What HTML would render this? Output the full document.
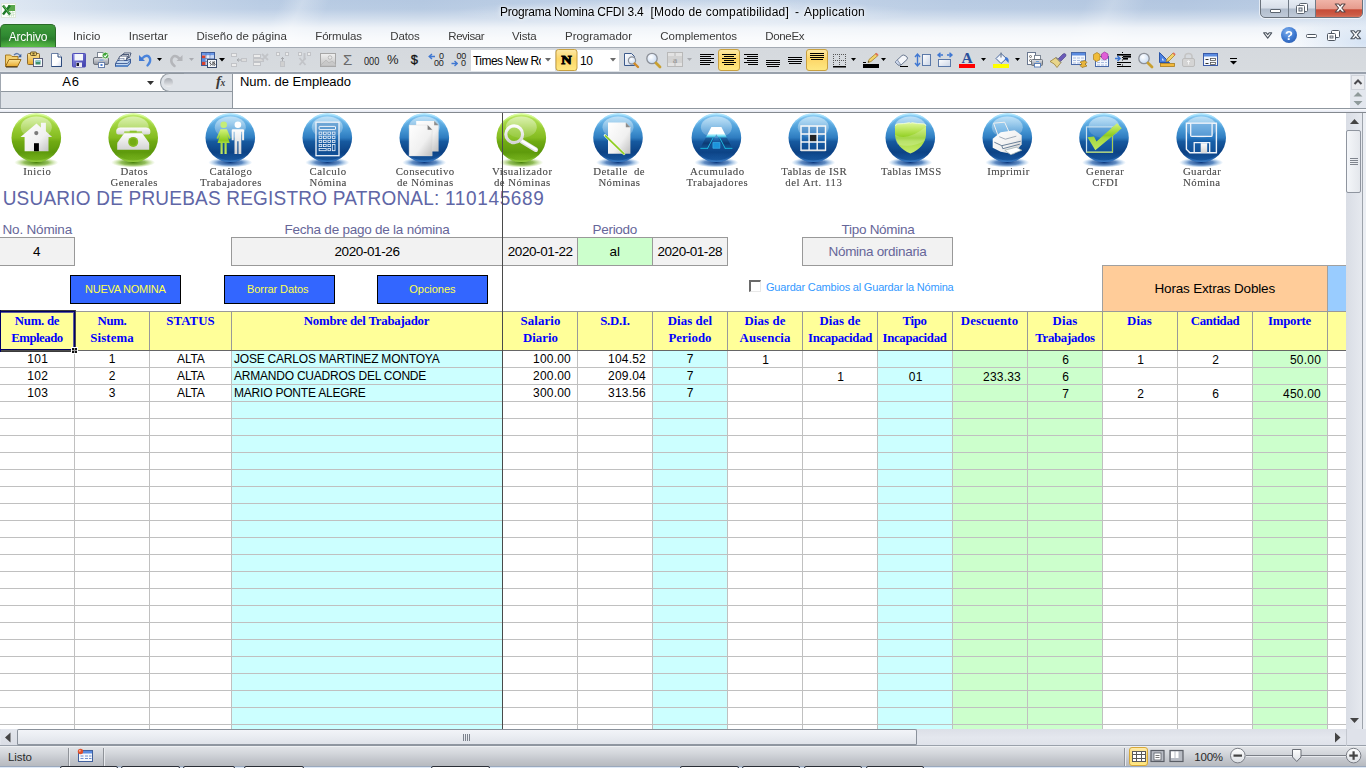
<!DOCTYPE html>
<html lang="es">
<head>
<meta charset="utf-8">
<title>Programa Nomina CFDI 3.4 [Modo de compatibilidad] - Application</title>
<style>
*{box-sizing:border-box;margin:0;padding:0}
html,body{width:1366px;height:768px;overflow:hidden;background:#fff}
body{position:relative;font-family:"Liberation Sans",sans-serif;font-size:12px;color:#1e1e1e}
.abs,.abs>*{position:absolute}
#app{position:absolute;left:0;top:0;width:1366px;height:768px;overflow:hidden}
#app div,#app span,#app svg{position:absolute}
.ui{font-family:"Liberation Sans",sans-serif;font-size:12px;white-space:pre}
/* title + tab strip */
#titlebg{left:0;top:0;width:1366px;height:47px;
 background:
  radial-gradient(ellipse 80px 26px at 1366px 42px,rgba(200,218,240,.75),rgba(200,218,240,0)),
  linear-gradient(180deg,rgba(255,255,255,0) 0,rgba(255,255,255,.05) 9px,rgba(255,255,255,.4) 19px,rgba(255,255,255,.78) 28px,rgba(255,255,255,.9) 38px,rgba(255,255,255,.94) 47px),
  radial-gradient(ellipse 230px 13px at 683px 12px,rgba(255,255,255,.55),rgba(255,255,255,0)),
  linear-gradient(115deg,rgba(255,255,255,0) 255px,rgba(255,255,255,.28) 275px,rgba(255,255,255,0) 300px),
  linear-gradient(115deg,rgba(255,255,255,0) 985px,rgba(255,255,255,.22) 1010px,rgba(255,255,255,0) 1040px),
  linear-gradient(90deg,#dfe8f3 0,#ccdaeb 110px,#b9cce4 260px,#b4c8e1 420px,#bccee5 560px,#c4d4e8 760px,#b8cbe3 950px,#b2c6e0 1180px,#bccee5 1366px)}
.tab{top:29px;height:16px;line-height:16px;color:#3b3b3b;letter-spacing:0.35px;font-size:12px}
#archivo{left:0;top:24px;width:56px;height:24px;border-radius:5px 5px 0 0;border:1px solid #2a6a28;border-bottom:none;
 background:radial-gradient(ellipse 40px 10px at 50% 100%,#5fc247,rgba(95,194,71,0)) ,linear-gradient(180deg,#3f9a3a 0%,#2f8a32 45%,#2a7d2c 60%,#47a83f 100%)}
#archivo span{left:0;width:54px;top:4px;text-align:center;color:#fff;font-size:12px;line-height:16px;letter-spacing:-.2px}
/* toolbar */
#qat{left:0;top:47px;width:1366px;height:26px;background:linear-gradient(180deg,#d5d9de 0,#d7dbdf 22px,#e2e6ec 24px);border-top:1px solid #a3aab3;border-bottom:1px solid #98a0ab}
/* formula bar */
#fbar{left:0;top:73px;width:1366px;height:40px;background:#fff}
#sheet{left:0;top:113px;width:1346px;height:616px;background:#fff;overflow:hidden}
.il{font:10.800px/13px 'Liberation Serif',serif;color:#555;white-space:pre;text-shadow:0 0 .6px rgba(80,80,80,.55)}
</style>
</head>
<body>
<div id="app">
<div id="titlebg"></div>
<svg id="xlicon" style="left:1px;top:3px" width="16" height="16" viewBox="0 0 16 16">
<rect x="0.5" y="0.5" width="14" height="14" fill="#fdfffc" stroke="#dfe8dc"/>
<rect x="7" y="2" width="7" height="6" fill="#5aa84c"/>
<rect x="7" y="9" width="6" height="4" fill="#e6f2e3" stroke="#9cc894" stroke-width=".6" stroke-dasharray="1 1"/>
<path d="M2 2.5 L9 11.5 M9 2.5 L2 11.5" stroke="#1f7a2a" stroke-width="2.4" fill="none"/>
<path d="M2.4 2.5 L8.6 10.5" stroke="#7ecb6f" stroke-width=".8" fill="none"/>
</svg>
<div id="ctext" style="left:0;top:0;width:1366px;height:47px;will-change:transform">
<span class="" style="left:500px;top:4px;font:12px 'Liberation Sans',sans-serif;line-height:16px;letter-spacing:-0.217px;white-space:pre;color:#000;text-shadow:0 0 6px #fff,0 0 3px rgba(255,255,255,.8)">Programa Nomina CFDI 3.4</span>
<span class="" style="left:650.5px;top:4px;font:12px 'Liberation Sans',sans-serif;line-height:16px;letter-spacing:0.212px;white-space:pre;color:#000;text-shadow:0 0 6px #fff,0 0 3px rgba(255,255,255,.8)">[Modo de compatibilidad]</span>
<span class="" style="left:795px;top:4px;font:12px 'Liberation Sans',sans-serif;line-height:16px;letter-spacing:-0.4px;white-space:pre;color:#000;text-shadow:0 0 6px #fff,0 0 3px rgba(255,255,255,.8)">-</span>
<span class="" style="left:804px;top:4px;font:12px 'Liberation Sans',sans-serif;line-height:16px;letter-spacing:0.207px;white-space:pre;color:#000;text-shadow:0 0 6px #fff,0 0 3px rgba(255,255,255,.8)">Application</span>
</div>
<div id="wbtn" style="left:1260px;top:-1px;width:103px;height:19px;border:1px solid #6a727c;border-radius:0 0 5px 5px;overflow:hidden;background:linear-gradient(180deg,#e6ecf4 0%,#d8dfe9 48%,#b0bccc 52%,#c0cad8 100%);box-shadow:0 0 0 1px rgba(255,255,255,.6)">
<div style="left:27px;top:0;width:1px;height:19px;background:#707a86"></div>
<div style="left:54px;top:0;width:1px;height:19px;background:#707a86"></div>
<div style="left:55px;top:0;width:48px;height:19px;background:linear-gradient(180deg,#f0b4a8 0%,#e69c8e 45%,#c64c38 52%,#cc5c46 78%,#e08870 100%)"></div>
<svg style="left:0;top:0" width="103" height="19" viewBox="0 0 103 19">
<rect x="9.5" y="9.5" width="10" height="3" rx=".5" fill="#fff" stroke="#5a636e"/>
<rect x="38.500" y="3.500" width="8" height="8" rx="1" fill="#fff" stroke="#5a636e"/>
<rect x="35.500" y="5.500" width="8" height="8" rx="1" fill="#fff" stroke="#5a636e"/>
<rect x="38" y="8" width="3" height="3" fill="#dfe5ec" stroke="#5a636e"/>
<polygon points="74.30,4.00 77.60,4.00 79.20,5.97 80.80,4.00 84.10,4.00 80.85,8.00 84.10,12.00 80.80,12.00 79.20,10.03 77.60,12.00 74.30,12.00 77.55,8.00" fill="#fff" stroke="#5a4646" stroke-width="1.100" stroke-linejoin="round"/>
</svg></div>
<svg style="left:1258px;top:26px" width="108" height="20" viewBox="0 0 108 20">
<polygon points="5.7,6.8 8.3,6.8 9.7,8.6 11.1,6.8 13.7,6.8 9.7,12.2" fill="#fff" stroke="#4d5560" stroke-width="1.100" stroke-linejoin="round"/>
<defs><radialGradient id="hg" cx=".4" cy=".3" r=".8"><stop offset="0" stop-color="#7fb0ee"/><stop offset=".6" stop-color="#3d78d0"/><stop offset="1" stop-color="#2a5cb0"/></radialGradient></defs>
<circle cx="31" cy="9" r="8" fill="url(#hg)"/>
<text x="31" y="13.500" text-anchor="middle" font-family="Liberation Sans,sans-serif" font-weight="bold" font-size="13" fill="#fff">?</text>
<rect x="48.500" y="8.500" width="10" height="3" rx="1" fill="#fff" stroke="#4d5560"/>
<rect x="73.500" y="4.500" width="8" height="7" rx="1" fill="#fff" stroke="#4d5560"/>
<rect x="69.500" y="7.500" width="8" height="7" rx="1" fill="#fff" stroke="#4d5560"/>
<rect x="72" y="10" width="3" height="2" fill="#e8ecf2" stroke="#4d5560" stroke-width=".8"/>
<polygon points="92.80,4.80 96.00,4.80 97.70,6.86 99.40,4.80 102.60,4.80 99.30,8.80 102.60,12.80 99.40,12.80 97.70,10.74 96.00,12.80 92.80,12.80 96.10,8.80" fill="#fff" stroke="#4d5560" stroke-width="1.100" stroke-linejoin="round"/>
</svg>
<div id="ctabs" style="left:0;top:0;width:1366px;height:47px;will-change:transform">
<div id="archivo"><span>Archivo</span></div>
<span class="" style="left:73px;top:28px;font:11.5px 'Liberation Sans',sans-serif;line-height:16px;letter-spacing:0.123px;white-space:pre;color:#3a3a3a">Inicio</span>
<span class="" style="left:128.7px;top:28px;font:11.5px 'Liberation Sans',sans-serif;line-height:16px;letter-spacing:0.013px;white-space:pre;color:#3a3a3a">Insertar</span>
<span class="" style="left:196.5px;top:28px;font:11.5px 'Liberation Sans',sans-serif;line-height:16px;letter-spacing:0.062px;white-space:pre;color:#3a3a3a">Diseño de página</span>
<span class="" style="left:315.3px;top:28px;font:11.5px 'Liberation Sans',sans-serif;line-height:16px;letter-spacing:-0.18px;white-space:pre;color:#3a3a3a">Fórmulas</span>
<span class="" style="left:390.3px;top:28px;font:11.5px 'Liberation Sans',sans-serif;line-height:16px;letter-spacing:-0.129px;white-space:pre;color:#3a3a3a">Datos</span>
<span class="" style="left:448.3px;top:28px;font:11.5px 'Liberation Sans',sans-serif;line-height:16px;letter-spacing:-0.469px;white-space:pre;color:#3a3a3a">Revisar</span>
<span class="" style="left:512px;top:28px;font:11.5px 'Liberation Sans',sans-serif;line-height:16px;letter-spacing:-0.152px;white-space:pre;color:#3a3a3a">Vista</span>
<span class="" style="left:565px;top:28px;font:11.5px 'Liberation Sans',sans-serif;line-height:16px;letter-spacing:-0.011px;white-space:pre;color:#3a3a3a">Programador</span>
<span class="" style="left:660.3px;top:28px;font:11.5px 'Liberation Sans',sans-serif;line-height:16px;letter-spacing:-0.054px;white-space:pre;color:#3a3a3a">Complementos</span>
<span class="" style="left:765.2px;top:28px;font:11.5px 'Liberation Sans',sans-serif;line-height:16px;letter-spacing:-0.32px;white-space:pre;color:#3a3a3a">DoneEx</span>
</div>
<div id="qat"></div>
<div style="left:471px;top:50px;width:84px;height:21px;background:#fff"></div>
<div style="left:577px;top:50px;width:42px;height:21px;background:#fff"></div>
<svg id="tbsvg" style="left:0;top:47px" width="1366" height="26" viewBox="0 47 1366 26"><defs>
<linearGradient id="gFold" x1="0" y1="0" x2="0" y2="1"><stop offset="0" stop-color="#fbe59a"/><stop offset="1" stop-color="#e8a92c"/></linearGradient>
<linearGradient id="gDoc" x1="0" y1="0" x2="1" y2="1"><stop offset="0" stop-color="#ffffff"/><stop offset="1" stop-color="#c9d4e6"/></linearGradient>
<linearGradient id="gDoc2" x1="0" y1="0" x2="1" y2="1"><stop offset="0" stop-color="#ffffff"/><stop offset=".6" stop-color="#ffffff"/><stop offset="1" stop-color="#d4dcec"/></linearGradient>
<linearGradient id="gFlop" x1="0" y1="0" x2="1" y2="1"><stop offset="0" stop-color="#8f90e8"/><stop offset="1" stop-color="#3b3ba8"/></linearGradient>
<linearGradient id="gPrn" x1="0" y1="0" x2="0" y2="1"><stop offset="0" stop-color="#e4e6ea"/><stop offset="1" stop-color="#8e939c"/></linearGradient>
<linearGradient id="gHi" x1="0" y1="0" x2="0" y2="1"><stop offset="0" stop-color="#fde9a8"/><stop offset=".45" stop-color="#fdd667"/><stop offset="1" stop-color="#fee883"/></linearGradient>
<radialGradient id="gLens" cx=".4" cy=".35" r=".7"><stop offset="0" stop-color="#ffffff"/><stop offset="1" stop-color="#c4d8f2"/></radialGradient>
<linearGradient id="gGray" x1="0" y1="0" x2="0" y2="1"><stop offset="0" stop-color="#f1f1f1"/><stop offset="1" stop-color="#bdbdbd"/></linearGradient>
<linearGradient id="gBlue" x1="0" y1="0" x2="0" y2="1"><stop offset="0" stop-color="#7fa8e8"/><stop offset="1" stop-color="#2f5cb8"/></linearGradient>
</defs>
<path d="M5.500 66.500 V55 h5 l1.500 1.500 h6 V59" fill="#f3cf6f" stroke="#a97c22"/>
<path d="M5.500 66.500 L9 59.500 H21 L17.500 66.500 Z" fill="url(#gFold)" stroke="#9a6d18"/><path d="M6 67 H17.500" stroke="#3a2a10" stroke-width="1"/>
<path d="M14 55 q3.500 -3.200 6 0.500" fill="none" stroke="#5a78a8" stroke-width="1.300"/><path d="M21.300 53.800 v3.400 h-3.400 z" fill="#3a5f9c"/>
<rect x="27.500" y="53.500" width="12" height="11" rx="1" fill="url(#gFold)" stroke="#8a6a30"/>
<rect x="30.500" y="52" width="6" height="3.500" rx="1" fill="#e8c860" stroke="#6a5426"/><rect x="32.500" y="53" width="2" height="1.500" fill="#6a5426"/>
<rect x="33.500" y="58.500" width="9" height="8" fill="#f7f9fc" stroke="#5a5e78"/>
<rect x="35.500" y="60.500" width="5" height="4" fill="#3f8f6f"/><rect x="35.500" y="60.500" width="5" height="1.500" fill="#8ccad0"/>
<path d="M51.500 53.500 h6.500 l3.500 3.500 v9.500 h-10 z" fill="url(#gDoc2)" stroke="#6a7fa4"/><path d="M61.500 57 v9.500 h-10" fill="none" stroke="#2c4a7c"/><path d="M58 53.500 v3.500 h3.500" fill="#fff" stroke="#2c4a7c"/>
<rect x="72.500" y="53.500" width="13" height="13.500" rx=".8" fill="url(#gFlop)" stroke="#5050b8"/>
<rect x="74.500" y="54" width="8.500" height="6.500" fill="#f4f6fb"/><rect x="76" y="62.500" width="6" height="4.500" fill="#ececf4"/><rect x="76.500" y="63" width="2.500" height="3" fill="#1a1a30"/>
<rect x="97.500" y="52.500" width="8" height="6" fill="#fff" stroke="#7d8794"/>
<rect x="93.500" y="57.500" width="15" height="7" rx="1.500" fill="url(#gPrn)" stroke="#6d737c"/>
<rect x="98.500" y="62.500" width="6" height="5" fill="#fff" stroke="#6a80a8"/><rect x="100.500" y="64" width="2" height="2" fill="#4a7fd0"/><rect x="99.500" y="59.500" width="4" height="1" fill="#6aa0e0"/>
<circle cx="105.500" cy="55.500" r="3.300" fill="#3fa33a" stroke="#e8f5e4" stroke-width=".8"/><path d="M103.800 55.500 l1.300 1.400 l2.200 -2.600" fill="none" stroke="#fff" stroke-width="1.100"/>
<path d="M121.500 57.500 l2.500 -4.500 h7 l-1.500 4.500 z" fill="#fff" stroke="#3a4a6a" stroke-width=".9"/><path d="M119.500 59 l2.500 -4.500 h7 l-1.500 4.500 z" fill="#fff" stroke="#3a4a6a" stroke-width=".9"/><path d="M117.500 60.500 l2.500 -4.500 h7.500 l-1.500 4.500 z" fill="#fff" stroke="#3a4a6a" stroke-width=".9"/>
<path d="M115.500 63.500 l2 -3 h9.500 l3.500 -1.500 v4 l-3 3.500 h-12 z" fill="#c4d8f0" stroke="#3a5a94"/><path d="M115.500 63.500 h12 l3 -3.500" fill="none" stroke="#3a5a94" stroke-width=".9"/><path d="M116 65 h11.500 l2.500 -3 v2 l-2.500 3 h-11.500z" fill="#5a88c8"/><rect x="119.500" y="58.500" width="4.500" height="2" fill="#e8eef8" stroke="#6a7a98" stroke-width=".6"/>
<path d="M142 58.500 q5.500 -5.500 8 0 q1 3.500 -2.500 7" fill="none" stroke="#4a84dc" stroke-width="2.400" stroke-linecap="round"/><path d="M139 55 v6 h6 z" fill="#3f77d2"/>
<path d="M157 58 h5 l-2.5 3.0 z" fill="#000"/>
<path d="M180 59 q-6 -6 -8.500 0 q-1 4 3 7" fill="none" stroke="#b4b6ba" stroke-width="2.600" stroke-linecap="round"/><path d="M182.500 55 v6 h-6 z" fill="#b4b6ba"/>
<path d="M189 58 h5 l-2.5 3.0 z" fill="#a9abb0"/>
<rect x="201.500" y="52.500" width="13" height="13" fill="#fff" stroke="#3c5a96"/><rect x="202" y="53" width="12" height="2.500" fill="#6a98e8"/>
<rect x="202" y="55.500" width="3.500" height="3" fill="#d8402c"/><rect x="202" y="61.500" width="3.500" height="3.500" fill="#d8402c"/><rect x="202" y="58.500" width="3.500" height="3" fill="#5a8ae0"/><rect x="206.500" y="55.500" width="3.500" height="3" fill="#e8eefa"/><rect x="210.500" y="55.500" width="3.500" height="3" fill="#c8d8f4"/><path d="M206 53 v12 M210 53 v12 M202 58.500 h12 M202 61.500 h12" stroke="#5a7ab8" stroke-width=".7"/>
<rect x="207.500" y="59.500" width="9" height="8" fill="#f4f6fa" stroke="#3a4a68"/><path d="M210.500 61.500 q-1.500 1 0 2 q1.500 1 0 2 M213 61.500 v4 M214.500 61.500 q-1 1 0 2 q1 1 0 2" stroke="#111" stroke-width=".9" fill="none"/>
<path d="M219 58 h6 l-3.0 3.5 z" fill="#000"/>
<rect x="231.500" y="53.500" width="5" height="3" fill="#ececec" stroke="#c2c4c8"/><rect x="231.500" y="63.500" width="5" height="3" fill="#ececec" stroke="#c2c4c8"/><rect x="241.500" y="58.500" width="5" height="3" fill="#dcdcdc" stroke="#c2c4c8"/><path d="M237 60 h4 M237 60 l2 -1.500 M237 60 l2 1.500" stroke="#a8aaae" fill="none"/>
<rect x="253.500" y="54.500" width="7" height="3" fill="#ececec" stroke="#c2c4c8"/><rect x="253.500" y="58.500" width="10" height="3" fill="#d8d8d8" stroke="#c2c4c8"/><rect x="253.500" y="62.500" width="7" height="3" fill="#ececec" stroke="#c2c4c8"/><path d="M262 54 l6 6 M268 54 l-6 6" stroke="#c2c4c8" stroke-width="1.800"/>
<rect x="276.500" y="52.500" width="3" height="3" fill="#ececec" stroke="#c2c4c8"/><rect x="285.500" y="52.500" width="3" height="3" fill="#ececec" stroke="#c2c4c8"/><rect x="280.500" y="61.500" width="4" height="5" fill="#d0d0d0" stroke="#c2c4c8"/><path d="M282.500 57 v4 M281 58.500 h3" stroke="#a8aaae"/>
<rect x="298.500" y="52.500" width="3" height="3" fill="#ececec" stroke="#c2c4c8"/><rect x="307.500" y="52.500" width="3" height="3" fill="#ececec" stroke="#c2c4c8"/><path d="M304.500 53 v7" stroke="#c2c4c8" stroke-width="2"/><path d="M299.500 58 l6 7 M305.500 58 l-6 7" stroke="#c2c4c8" stroke-width="1.800"/>
<rect x="320.500" y="53.500" width="15" height="13" fill="url(#gGray)" stroke="#a6a6a6"/><path d="M321 65 l5 -5 l3 3 l3 -2 l3.500 3 v2 h-14.500z" fill="#c8c8c8" stroke="#b0b0b0" stroke-width=".6"/><circle cx="330" cy="57.500" r="1.800" fill="#e8e8e8" stroke="#b0b0b0" stroke-width=".8"/>
<rect x="556.0" y="49.500" width="21" height="21" rx="2.500" fill="url(#gHi)" stroke="#c8a040"/>
<rect x="718.5" y="49.500" width="21" height="21" rx="2.500" fill="url(#gHi)" stroke="#c8a040"/>
<rect x="806.5" y="49.500" width="21" height="21" rx="2.500" fill="url(#gHi)" stroke="#c8a040"/>
<rect x="700" y="54" width="14" height="1" fill="#000"/>
<rect x="700" y="56" width="11" height="1" fill="#000"/>
<rect x="700" y="58" width="14" height="1" fill="#000"/>
<rect x="700" y="60" width="11" height="1" fill="#000"/>
<rect x="700" y="62" width="14" height="1" fill="#000"/>
<rect x="700" y="64" width="10" height="1" fill="#000"/>
<rect x="722.0" y="54" width="14" height="1" fill="#000"/>
<rect x="724.0" y="56" width="10" height="1" fill="#000"/>
<rect x="722.0" y="58" width="14" height="1" fill="#000"/>
<rect x="724.0" y="60" width="10" height="1" fill="#000"/>
<rect x="722.0" y="62" width="14" height="1" fill="#000"/>
<rect x="724.0" y="64" width="10" height="1" fill="#000"/>
<rect x="744" y="54" width="14" height="1" fill="#000"/>
<rect x="747" y="56" width="11" height="1" fill="#000"/>
<rect x="744" y="58" width="14" height="1" fill="#000"/>
<rect x="747" y="60" width="11" height="1" fill="#000"/>
<rect x="744" y="62" width="14" height="1" fill="#000"/>
<rect x="748" y="64" width="10" height="1" fill="#000"/>
<rect x="766.0" y="60" width="14" height="1" fill="#000"/>
<rect x="766.0" y="62" width="14" height="1" fill="#000"/>
<rect x="766.0" y="64" width="14" height="1" fill="#000"/>
<rect x="767.0" y="66" width="12" height="1" fill="#000"/>
<rect x="788.0" y="57" width="14" height="1" fill="#000"/>
<rect x="788.0" y="59" width="14" height="1" fill="#000"/>
<rect x="788.0" y="61" width="14" height="1" fill="#000"/>
<rect x="789.0" y="63" width="12" height="1" fill="#000"/>
<rect x="810.0" y="53" width="14" height="1" fill="#000"/>
<rect x="810.0" y="55" width="14" height="1" fill="#000"/>
<rect x="810.0" y="57" width="14" height="1" fill="#000"/>
<rect x="811.0" y="59" width="12" height="1" fill="#000"/>
<path d="M624.500 53.500 h7 l3 3 v9 h-10 z" fill="url(#gDoc)" stroke="#3c5a8c"/>
<circle cx="632" cy="60.500" r="3.600" fill="url(#gLens)" stroke="#8a8f98" stroke-width="1.200"/><path d="M634.500 63.500 l3.500 3.500" stroke="#d08a28" stroke-width="2.400" stroke-linecap="round"/>
<circle cx="652" cy="58.500" r="5.200" fill="url(#gLens)" stroke="#8c9098" stroke-width="1.300"/><path d="M656 63 l4 4" stroke="#c9a030" stroke-width="2.800" stroke-linecap="round"/>
<rect x="667.500" y="52.500" width="15" height="14" fill="#e2e2e2" stroke="#b8b8b8"/><rect x="668" y="56" width="14" height="7" fill="#d2d2d2"/><path d="M675 53 v3 M675 63 v3" stroke="#b8b8b8"/>
<text x="675" y="62.500" text-anchor="middle" font-family="Liberation Serif,serif" font-weight="bold" font-size="9" fill="#a0a0a0">a</text>
<path d="M687 58 h5 l-2.5 3.0 z" fill="#a9abb0"/>
<path d="M833 54.500 h13" stroke="#555" stroke-dasharray="1 1"/>
<path d="M833 60.500 h13" stroke="#555" stroke-dasharray="1 1"/>
<path d="M833.500 54 v12" stroke="#555" stroke-dasharray="1 1"/>
<path d="M839.500 54 v12" stroke="#555" stroke-dasharray="1 1"/>
<path d="M845.500 54 v12" stroke="#555" stroke-dasharray="1 1"/>
<rect x="833" y="66" width="13" height="1.500" fill="#000"/>
<path d="M851 58 h5 l-2.5 3.0 z" fill="#000"/>
<rect x="863" y="64" width="16" height="4" fill="#000"/><rect x="863" y="62" width="3" height="1" fill="#000"/>
<path d="M868 62.500 l1 -3 l7 -6 l2 2 l-7 6 z" fill="#f2d36a" stroke="#a8842a" stroke-width=".8"/><path d="M875 54 l1.500 -1.200 l2 2 l-1.500 1.200z" fill="#e0705c"/><path d="M868 62.500 l.5 -1.500 l1 1z" fill="#333"/>
<path d="M881 58 h5 l-2.5 3.0 z" fill="#000"/>
<path d="M895 62 l7 -6.500 q1 -1 3 0 l2 1.500 q1 1 0 2.500 l-6 5.500 h-3 z" fill="#f4f6fa" stroke="#6a7890"/><path d="M895 62 l3 3 h3 l-3.500 -5" fill="#c8d4ea" stroke="#6a7890" stroke-width=".7"/><path d="M900 66.500 h8" stroke="#000"/>
<rect x="922.500" y="54.500" width="8" height="11" fill="url(#gDoc)" stroke="#5a78a8"/><path d="M917.500 54 v12 M915 57 l2.500 -3 l2.500 3 M915 63 l2.500 3 l2.500 -3" fill="none" stroke="#3f77d2" stroke-width="1.400"/>
<rect x="938.500" y="59.500" width="12" height="7" fill="url(#gDoc)" stroke="#5a78a8"/><path d="M938 55 h5 M947 55 h5 M940.500 52.800 l-2.500 2.200 l2.500 2.200 M949.500 52.800 l2.500 2.200 l-2.500 2.200" fill="none" stroke="#3f77d2" stroke-width="1.400"/>
<text x="967" y="63" text-anchor="middle" font-family="Liberation Serif,serif" font-weight="bold" font-size="15.500" fill="#2b4f9a">A</text><rect x="959" y="64" width="16" height="4" fill="#ff0000"/>
<path d="M981 58 h5 l-2.5 3.0 z" fill="#000"/>
<rect x="993" y="64" width="16" height="4" fill="#ffff00"/>
<path d="M996 58.500 l5 -5 l5.500 5 l-5.500 5 z" fill="#f2f6fc" stroke="#4a6aa0"/><path d="M1001 52.500 v5" stroke="#6a7a90" stroke-width="1.200"/><path d="M1006 57 q3.500 1 2.500 6 q-2 -3 -4 -3.500z" fill="#3f77d2"/>
<path d="M1015 58 h5 l-2.5 3.0 z" fill="#000"/>
<rect x="1027.500" y="52.500" width="8" height="12" fill="#fff" stroke="#6a7890"/><circle cx="1030.500" cy="56.500" r="1" fill="none" stroke="#444" stroke-width=".7"/><circle cx="1030.500" cy="60.500" r="1" fill="none" stroke="#444" stroke-width=".7"/>
<rect x="1034.500" y="55.500" width="6" height="4" fill="#fff" stroke="#7d8794"/><rect x="1031.500" y="59.500" width="11" height="6" rx="1" fill="url(#gPrn)" stroke="#6d737c"/><rect x="1034.500" y="63.500" width="6" height="3.500" fill="#fff" stroke="#5a7fb8"/><rect x="1036" y="61" width="3" height="1" fill="#6aa0e0"/>
<path d="M1058 59 l5 -5 q1.500 -1 2.500 0 q1 1 0 2.500 l-5 5z" fill="#6a5ab8" stroke="#3f3a80" stroke-width=".6"/><path d="M1050 61.500 l6 -4 l5 5 l-4 5 q-2 -4 -7 -6z" fill="#e8d58a" stroke="#9a8238" stroke-width=".8"/><path d="M1056 57.500 l5 5" stroke="#888" stroke-width="1.200"/>
<rect x="1071.500" y="52.500" width="14" height="12" fill="#f4f7fc" stroke="#4a6aa8"/><rect x="1072" y="53" width="13" height="2.500" fill="#5a8be0"/><path d="M1073 58 h11 M1073 60.500 h11 M1073 63 h11" stroke="#a8bce0" stroke-width="1.200" stroke-dasharray="3 1"/>
<path d="M1080 62 l5 -1.500 l2 2 l-2 1.500 l2 2 l-5 1.500 l-2 -2 l2 -1.500z" fill="#e8b43a" stroke="#9a7420" stroke-width=".7"/>
<rect x="1095.500" y="56.500" width="13" height="10" fill="#f4f7fc" stroke="#4a6aa8"/><path d="M1097 60 h10 M1097 62.500 h10 M1097 65 h10" stroke="#a8bce0" stroke-width="1.200" stroke-dasharray="3 1"/>
<path d="M1093.500 54.500 l3.500 -2 l3 2 v5 l-3.500 2 l-3 -2z" fill="#f0bc3a" stroke="#a87c20" stroke-width=".7"/><path d="M1101.500 54 l3 -2 l3.500 2 v4 l-3.500 2 l-3 -2z" fill="#e060d8" stroke="#a030a0" stroke-width=".7"/>
<rect x="1117" y="54" width="14" height="1.6" fill="#000"/>
<rect x="1123" y="56" width="8" height="1.6" fill="#000"/>
<rect x="1123" y="58" width="5" height="1.6" fill="#000"/>
<rect x="1117" y="62" width="14" height="1" fill="#000"/>
<rect x="1117" y="64" width="4" height="1" fill="#000"/>
<rect x="1117" y="66" width="14" height="1" fill="#000"/>
<path d="M1122.500 52 v15" stroke="#000" stroke-dasharray="1 1.500"/><path d="M1115 58.500 h4 M1117.500 56 l2.500 2.500 l-2.500 2.500" fill="none" stroke="#3f77d2" stroke-width="1.500"/>
<circle cx="1144" cy="58.500" r="5.200" fill="url(#gLens)" stroke="#8c9098" stroke-width="1.300"/><path d="M1148 63 l4 4" stroke="#c9a030" stroke-width="2.800" stroke-linecap="round"/>
<path d="M1159.500 52.500 v10 h10 z" fill="#4a80e0" stroke="#2a55a8"/><path d="M1162 58 v2.500 h2.500z" fill="#cfe0fa"/><rect x="1160.500" y="63.500" width="14" height="3" fill="#f2b83a" stroke="#a87c20" stroke-width=".8"/>
<path d="M1166 61.500 l1 -2.500 l6 -6 l2 2 l-6 6 z" fill="#f2d36a" stroke="#a8842a" stroke-width=".8"/><path d="M1172.500 53.500 l1.200 -1.200 l2 2 l-1.200 1.200z" fill="#e0705c"/>
<path d="M1185 59 v-2.500 q0 -3 3.500 -3 q3.500 0 3.500 3 v2.500" fill="none" stroke="#c4c4c4" stroke-width="1.600"/><rect x="1182.500" y="58.500" width="12" height="8" rx="1.500" fill="#d4d4d4" stroke="#bcbcbc"/><path d="M1188.500 61 v3.500 M1187 62 l1.500 -1.500 l1.500 1.500" stroke="#f4f4f4" fill="none"/>
<rect x="1203.500" y="53.500" width="14" height="12" fill="#f4f7fc" stroke="#3a5aa8"/><rect x="1204" y="54" width="13" height="2.500" fill="#5a8be0"/><rect x="1210.500" y="58.500" width="5" height="2" fill="#fff" stroke="#555" stroke-width=".8"/><rect x="1210.500" y="62.500" width="5" height="2" fill="#fff" stroke="#555" stroke-width=".8"/><path d="M1205.500 59.500 h3 M1205.500 63.500 h3" stroke="#333"/>
<rect x="1230" y="58" width="7" height="1" fill="#000"/><path d="M1230 61 h7 l-3.500 3.500z" fill="#000"/></svg>
<div style="left:473px;top:51px;width:67.500px;height:19px;overflow:hidden">
<span style="left:0px;top:1.5px;font:12px 'Liberation Sans',sans-serif;line-height:16px;letter-spacing:-0.551px;white-space:pre;color:#000">Times New Roman</span>
</div>
<svg style="left:545px;top:58px" width="7" height="5" viewBox="0 0 7 5"><path d="M0 0 h6 l-3 3.500z" fill="#6a6a6a"/></svg>
<svg style="left:610px;top:58px" width="7" height="5" viewBox="0 0 7 5"><path d="M0 0 h6 l-3 3.500z" fill="#6a6a6a"/></svg>
<span style="left:580px;top:52.5px;font:12px 'Liberation Sans',sans-serif;line-height:16px;letter-spacing:-0.43px;white-space:pre;color:#000">10</span>
<span style="left:556px;top:50px;width:21px;height:20px;text-align:center;font:bold 12.500px/20px 'Liberation Serif',serif;color:#000;-webkit-text-stroke:.9px #000;transform:scaleX(1.15)">N</span>
<span style="left:343px;top:50px;font:15px/20px 'Liberation Sans',sans-serif;color:#6a6a6a">Σ</span>
<span style="left:363.5px;top:53px;font:11.500px 'Liberation Sans',sans-serif;line-height:16px;letter-spacing:-0.062px;white-space:pre;color:#222;transform:scaleX(.8);transform-origin:0 0">000</span>
<span style="left:387px;top:52px;font:13px 'Liberation Sans',sans-serif;line-height:16px;letter-spacing:-0.062px;white-space:pre;color:#222">%</span>
<span style="left:410.800px;top:51.500px;font:13px/16px 'Liberation Sans',sans-serif;color:#111;-webkit-text-stroke:.3px #111">$</span>
<span style="left:439px;top:50.500px;font:9px/10px 'Liberation Sans',sans-serif;color:#222">0</span>
<span style="left:434px;top:57.500px;font:9px/10px 'Liberation Sans',sans-serif;color:#222;letter-spacing:-.3px">00</span>
<span style="left:456.500px;top:50.500px;font:9px/10px 'Liberation Sans',sans-serif;color:#222;letter-spacing:-.3px">00</span>
<span style="left:461px;top:57.500px;font:9px/10px 'Liberation Sans',sans-serif;color:#222">0</span>
<svg style="left:428px;top:52px" width="30" height="16" viewBox="428 52 30 16"><path d="M429.500 56.500 h5.500 M432 54 l-2.800 2.500 l2.800 2.500" fill="none" stroke="#3f77d2" stroke-width="1.400"/><path d="M451.500 63.500 h5.500 M454.500 61 l2.800 2.500 l-2.800 2.500" fill="none" stroke="#3f77d2" stroke-width="1.400"/></svg>
<div style="left:0px;top:73px;width:1366px;height:40px;background:#fff;"></div>
<div style="left:0px;top:73px;width:1366px;height:1px;background:#9aa2ad;"></div>
<div style="left:0px;top:92px;width:233px;height:16px;background:#dfe3e8;"></div>
<div style="left:0px;top:91px;width:233px;height:1px;background:#8f979f;"></div>
<div style="left:170px;top:74px;width:63px;height:17px;background:#dfe3e8;"></div>
<div style="left:160px;top:73px;width:24px;height:19px;border:1px solid #8f979f;border-right:none;border-radius:10px 0 0 10px;background:#dfe3e8"></div>
<div style="left:232px;top:74px;width:1px;height:34px;background:#8f979f;"></div>
<div style="left:0px;top:74px;width:1px;height:38px;background:#a0a7b0;"></div>
<div style="left:0px;top:108px;width:1366px;height:1px;background:#8f979f;"></div>
<div style="left:0px;top:109px;width:1366px;height:3px;background:linear-gradient(180deg,#fdfdfe,#e4e8f2);"></div>
<div style="left:0px;top:112px;width:1366px;height:1px;background:#84898f;"></div>
<div style="left:164px;top:78px;width:9px;height:9px;border-radius:5px;background:linear-gradient(180deg,#a9adb3,#c9ccd1 50%,#eceef0)"></div>
<span style="left:216px;top:72.500px;font:italic bold 15px/17px 'Liberation Serif',serif;color:#3a3a3a;letter-spacing:-.5px">f<span style="position:static;font-size:9.500px;font-style:italic">x</span></span>
<svg style="left:147px;top:81px" width="7" height="4" viewBox="0 0 7 4"><path d="M0 0h7l-3.500 4z" fill="#333"/></svg>
<span style="left:62.3px;top:74px;font:13px 'Liberation Sans',sans-serif;line-height:16px;letter-spacing:0.797px;white-space:pre;color:#000">A6</span>
<span style="left:240px;top:74px;font:13px 'Liberation Sans',sans-serif;line-height:16px;letter-spacing:-0.018px;white-space:pre;color:#000">Num. de Empleado</span>
<div style="left:1350px;top:74px;width:16px;height:34px;background:#e3e7ee;"></div>
<div style="left:1351px;top:75px;width:14px;height:15px;background:#e9ebef;border:1px solid #cfd3da"></div>
<svg style="left:1350px;top:74px" width="16" height="34" viewBox="1350 74 16 34"><path d="M1354.500 84 l3.500 -3.500 l3.500 3.500" fill="none" stroke="#4a4a4e" stroke-width="2"/><path d="M1353.500 96.500 h9 l-4.500 -4.500z M1353.500 101 h9 l-4.500 4.500z" fill="#8f9a9a"/></svg>
<div style="left:0px;top:113px;width:1346px;height:616px;background:#fff;"></div>
<div style="left:0px;top:311px;width:1346px;height:40px;background:#ffff99;"></div>
<div style="left:232px;top:351px;width:270px;height:378px;background:#ccffff;"></div>
<div style="left:653px;top:351px;width:74px;height:378px;background:#ccffff;"></div>
<div style="left:878px;top:351px;width:74px;height:378px;background:#ccffff;"></div>
<div style="left:953px;top:351px;width:74px;height:378px;background:#ccffcc;"></div>
<div style="left:1028px;top:351px;width:74px;height:378px;background:#ccffcc;"></div>
<div style="left:1253px;top:351px;width:74px;height:378px;background:#ccffcc;"></div>
<div style="left:1102px;top:265px;width:226px;height:47px;background:#ffcc99;"></div>
<div style="left:1328px;top:265px;width:18px;height:46px;background:#99ccff;"></div>
<div style="left:1102px;top:265px;width:244px;height:1px;background:#a0a0a0;"></div>
<div style="left:1102px;top:265px;width:1px;height:46px;background:#a0a0a0;"></div>
<div style="left:1327px;top:265px;width:1px;height:46px;background:#a0a0a0;"></div>
<div style="left:0;top:351px;width:1346px;height:378px;background:repeating-linear-gradient(180deg,transparent 0,transparent 16px,#c0c0c0 16px,#c0c0c0 17px)"></div>
<div style="left:74px;top:351px;width:1px;height:378px;background:#c0c0c0;"></div>
<div style="left:149px;top:351px;width:1px;height:378px;background:#c0c0c0;"></div>
<div style="left:231px;top:351px;width:1px;height:378px;background:#c0c0c0;"></div>
<div style="left:577px;top:351px;width:1px;height:378px;background:#c0c0c0;"></div>
<div style="left:652px;top:351px;width:1px;height:378px;background:#c0c0c0;"></div>
<div style="left:727px;top:351px;width:1px;height:378px;background:#c0c0c0;"></div>
<div style="left:802px;top:351px;width:1px;height:378px;background:#c0c0c0;"></div>
<div style="left:877px;top:351px;width:1px;height:378px;background:#c0c0c0;"></div>
<div style="left:952px;top:351px;width:1px;height:378px;background:#c0c0c0;"></div>
<div style="left:1027px;top:351px;width:1px;height:378px;background:#c0c0c0;"></div>
<div style="left:1102px;top:351px;width:1px;height:378px;background:#c0c0c0;"></div>
<div style="left:1177px;top:351px;width:1px;height:378px;background:#c0c0c0;"></div>
<div style="left:1252px;top:351px;width:1px;height:378px;background:#c0c0c0;"></div>
<div style="left:1327px;top:351px;width:1px;height:378px;background:#c0c0c0;"></div>
<div style="left:0px;top:311px;width:1346px;height:1px;background:#999;"></div>
<div style="left:74px;top:311px;width:1px;height:39px;background:#999;"></div>
<div style="left:149px;top:311px;width:1px;height:39px;background:#999;"></div>
<div style="left:231px;top:311px;width:1px;height:39px;background:#999;"></div>
<div style="left:577px;top:311px;width:1px;height:39px;background:#999;"></div>
<div style="left:652px;top:311px;width:1px;height:39px;background:#999;"></div>
<div style="left:727px;top:311px;width:1px;height:39px;background:#999;"></div>
<div style="left:802px;top:311px;width:1px;height:39px;background:#999;"></div>
<div style="left:877px;top:311px;width:1px;height:39px;background:#999;"></div>
<div style="left:952px;top:311px;width:1px;height:39px;background:#999;"></div>
<div style="left:1027px;top:311px;width:1px;height:39px;background:#999;"></div>
<div style="left:1102px;top:311px;width:1px;height:39px;background:#999;"></div>
<div style="left:1177px;top:311px;width:1px;height:39px;background:#999;"></div>
<div style="left:1252px;top:311px;width:1px;height:39px;background:#999;"></div>
<div style="left:1327px;top:311px;width:1px;height:39px;background:#999;"></div>
<div style="left:0px;top:350px;width:1346px;height:1px;background:#666;"></div>
<div style="left:-1px;top:237px;width:76px;height:29px;background:#f2f2f2;border:1px solid #999"></div>
<div style="left:231px;top:237px;width:272px;height:29px;background:#f2f2f2;border:1px solid #999"></div>
<div style="left:502px;top:237px;width:76px;height:29px;background:#f2f2f2;border:1px solid #999"></div>
<div style="left:577px;top:237px;width:76px;height:29px;background:#ccffcc;border:1px solid #999"></div>
<div style="left:652px;top:237px;width:76px;height:29px;background:#f2f2f2;border:1px solid #999"></div>
<div style="left:802px;top:237px;width:151px;height:29px;background:#f2f2f2;border:1px solid #999"></div>
<div style="left:502px;top:113px;width:1px;height:616px;background:#555;"></div>
<div style="left:0px;top:310px;width:76px;height:1px;background:#3a3a3a;"></div>
<div style="left:0px;top:311px;width:76px;height:1px;background:#000066;"></div>
<div style="left:0px;top:312px;width:76px;height:1px;background:#5a5a9c;"></div>
<div style="left:0px;top:349px;width:76px;height:1px;background:#000066;"></div>
<div style="left:0px;top:350px;width:76px;height:1px;background:#4a4a4a;"></div>
<div style="left:0px;top:351px;width:76px;height:1px;background:#3a3a3a;"></div>
<div style="left:0px;top:310px;width:1px;height:42px;background:#000066;"></div>
<div style="left:73px;top:312px;width:1px;height:38px;background:#5a5a9c;"></div>
<div style="left:74px;top:311px;width:1px;height:40px;background:#000066;"></div>
<div style="left:75px;top:310px;width:1px;height:42px;background:#4a4a4a;"></div>
<div style="left:71px;top:347px;width:7px;height:7px;background:#fff;"></div>
<div style="left:72px;top:348px;width:5px;height:5px;background:#111;"></div>
<div style="left:74px;top:348px;width:1px;height:5px;background:#9a9a9a;"></div>
<div style="left:72px;top:350px;width:5px;height:1px;background:#9a9a9a;"></div>
<span style="left:2.7px;top:187.3px;font:19px 'Liberation Sans',sans-serif;line-height:24px;letter-spacing:0.211px;white-space:pre;color:#6066a6;transform:scaleY(1.08);transform-origin:0 19px">USUARIO DE PRUEBAS REGISTRO PATRONAL: </span>
<span style="left:445px;top:187.3px;font:19px 'Liberation Sans',sans-serif;line-height:24px;letter-spacing:0.644px;white-space:pre;color:#6066a6;transform:scaleY(1.08);transform-origin:0 19px">110145689</span>
<span style="left:2.5px;top:221.5px;font:13.500px 'Liberation Sans',sans-serif;line-height:16px;letter-spacing:-0.178px;white-space:pre;color:#666699">No. Nómina</span>
<span style="left:284.5px;top:221.5px;font:13.500px 'Liberation Sans',sans-serif;line-height:16px;letter-spacing:-0.236px;white-space:pre;color:#666699">Fecha de pago de la nómina</span>
<span style="left:592.5px;top:221.5px;font:13.500px 'Liberation Sans',sans-serif;line-height:16px;letter-spacing:-0.292px;white-space:pre;color:#666699">Periodo</span>
<span style="left:841.5px;top:221.5px;font:13.500px 'Liberation Sans',sans-serif;line-height:16px;letter-spacing:-0.276px;white-space:pre;color:#666699">Tipo Nómina</span>
<span style="left:828.5px;top:243.5px;font:13.500px 'Liberation Sans',sans-serif;line-height:16px;letter-spacing:-0.301px;white-space:pre;color:#666699">Nómina ordinaria</span>
<span style="left:33px;top:243.5px;font:13.500px 'Liberation Sans',sans-serif;line-height:16px;letter-spacing:0.484px;white-space:pre;color:#000">4</span>
<span style="left:334.5px;top:243.5px;font:13.500px 'Liberation Sans',sans-serif;line-height:16px;letter-spacing:-0.406px;white-space:pre;color:#000">2020-01-26</span>
<span style="left:507.7px;top:243.5px;font:13.500px 'Liberation Sans',sans-serif;line-height:16px;letter-spacing:-0.406px;white-space:pre;color:#000">2020-01-22</span>
<span style="left:609.5px;top:243.5px;font:13.500px 'Liberation Sans',sans-serif;line-height:16px;letter-spacing:-0.008px;white-space:pre;color:#000">al</span>
<span style="left:657.5px;top:243.5px;font:13.500px 'Liberation Sans',sans-serif;line-height:16px;letter-spacing:-0.456px;white-space:pre;color:#000">2020-01-28</span>
<span style="left:1154.5px;top:280.5px;font:13.500px 'Liberation Sans',sans-serif;line-height:16px;letter-spacing:-0.174px;white-space:pre;color:#000">Horas Extras Dobles</span>
<div style="left:70px;top:275px;width:111px;height:29px;background:#3366ff;border:1px solid #000"></div>
<span style="left:85px;top:282px;font:11px 'Liberation Sans',sans-serif;line-height:14px;letter-spacing:-0.253px;white-space:pre;color:#ffff4d">NUEVA NOMINA</span>
<div style="left:224px;top:275px;width:111px;height:29px;background:#3366ff;border:1px solid #000"></div>
<span style="left:247px;top:282px;font:11px 'Liberation Sans',sans-serif;line-height:14px;letter-spacing:-0.072px;white-space:pre;color:#ffff4d">Borrar Datos</span>
<div style="left:377px;top:275px;width:111px;height:29px;background:#3366ff;border:1px solid #000"></div>
<span style="left:409.3px;top:282px;font:11px 'Liberation Sans',sans-serif;line-height:14px;letter-spacing:-0.036px;white-space:pre;color:#ffff4d">Opciones</span>
<div style="left:749px;top:280px;width:12px;height:12px;background:#fff;border:1px solid #e8e8e8;border-top:2px solid #6a6a6a;border-left:2px solid #6a6a6a"></div>
<span style="left:766px;top:280px;font:11px 'Liberation Sans',sans-serif;line-height:14px;letter-spacing:-0.192px;white-space:pre;color:#3399ff">Guardar Cambios al Guardar la Nómina</span>
<span style="left:14.8px;top:313px;font:bold 12.800px 'Liberation Serif',serif;line-height:17px;letter-spacing:-0.26px;white-space:pre;color:#0000ff">Num. de</span>
<span style="left:11.2px;top:330px;font:bold 12.800px 'Liberation Serif',serif;line-height:17px;letter-spacing:-0.484px;white-space:pre;color:#0000ff">Empleado</span>
<span style="left:97.5px;top:313px;font:bold 12.800px 'Liberation Serif',serif;line-height:17px;letter-spacing:-0.305px;white-space:pre;color:#0000ff">Num.</span>
<span style="left:90.2px;top:330px;font:bold 12.800px 'Liberation Serif',serif;line-height:17px;letter-spacing:0.135px;white-space:pre;color:#0000ff">Sistema</span>
<span style="left:166.2px;top:313px;font:bold 12.800px 'Liberation Serif',serif;line-height:17px;letter-spacing:0.118px;white-space:pre;color:#0000ff">STATUS</span>
<span style="left:303.8px;top:313px;font:bold 12.800px 'Liberation Serif',serif;line-height:17px;letter-spacing:-0.224px;white-space:pre;color:#0000ff">Nombre del Trabajador</span>
<span style="left:520.5px;top:313px;font:bold 12.800px 'Liberation Serif',serif;line-height:17px;letter-spacing:0.127px;white-space:pre;color:#0000ff">Salario</span>
<span style="left:523.0px;top:330px;font:bold 12.800px 'Liberation Serif',serif;line-height:17px;letter-spacing:0.026px;white-space:pre;color:#0000ff">Diario</span>
<span style="left:600.2px;top:313px;font:bold 12.800px 'Liberation Serif',serif;line-height:17px;letter-spacing:-0.223px;white-space:pre;color:#0000ff">S.D.I.</span>
<span style="left:667.8px;top:313px;font:bold 12.800px 'Liberation Serif',serif;line-height:17px;letter-spacing:0.083px;white-space:pre;color:#0000ff">Dias del</span>
<span style="left:668.5px;top:330px;font:bold 12.800px 'Liberation Serif',serif;line-height:17px;letter-spacing:0.049px;white-space:pre;color:#0000ff">Periodo</span>
<span style="left:744.5px;top:313px;font:bold 12.800px 'Liberation Serif',serif;line-height:17px;letter-spacing:0.118px;white-space:pre;color:#0000ff">Dias de</span>
<span style="left:739.5px;top:330px;font:bold 12.800px 'Liberation Serif',serif;line-height:17px;letter-spacing:0.152px;white-space:pre;color:#0000ff">Ausencia</span>
<span style="left:819.5px;top:313px;font:bold 12.800px 'Liberation Serif',serif;line-height:17px;letter-spacing:0.118px;white-space:pre;color:#0000ff">Dias de</span>
<span style="left:808.0px;top:330px;font:bold 12.800px 'Liberation Serif',serif;line-height:17px;letter-spacing:-0.324px;white-space:pre;color:#0000ff">Incapacidad</span>
<span style="left:902.5px;top:313px;font:bold 12.800px 'Liberation Serif',serif;line-height:17px;letter-spacing:-0.348px;white-space:pre;color:#0000ff">Tipo</span>
<span style="left:882.5px;top:330px;font:bold 12.800px 'Liberation Serif',serif;line-height:17px;letter-spacing:-0.324px;white-space:pre;color:#0000ff">Incapacidad</span>
<span style="left:960.8px;top:313px;font:bold 12.800px 'Liberation Serif',serif;line-height:17px;letter-spacing:0.138px;white-space:pre;color:#0000ff">Descuento</span>
<span style="left:1052.5px;top:313px;font:bold 12.800px 'Liberation Serif',serif;line-height:17px;letter-spacing:0.203px;white-space:pre;color:#0000ff">Dias</span>
<span style="left:1035.2px;top:330px;font:bold 12.800px 'Liberation Serif',serif;line-height:17px;letter-spacing:-0.274px;white-space:pre;color:#0000ff">Trabajados</span>
<span style="left:1127.0px;top:313px;font:bold 12.800px 'Liberation Serif',serif;line-height:17px;letter-spacing:0.203px;white-space:pre;color:#0000ff">Dias</span>
<span style="left:1190.8px;top:313px;font:bold 12.800px 'Liberation Serif',serif;line-height:17px;letter-spacing:-0.352px;white-space:pre;color:#0000ff">Cantidad</span>
<span style="left:1268.0px;top:313px;font:bold 12.800px 'Liberation Serif',serif;line-height:17px;letter-spacing:-0.254px;white-space:pre;color:#0000ff">Importe</span>
<span style="left:27.3px;top:350.5px;font:12px 'Liberation Sans',sans-serif;line-height:16px;letter-spacing:0.323px;white-space:pre;color:#000">101</span>
<span style="left:108.8px;top:350.5px;font:12px 'Liberation Sans',sans-serif;line-height:16px;letter-spacing:0.312px;white-space:pre;color:#000">1</span>
<span style="left:177.08px;top:350.5px;font:12px 'Liberation Sans',sans-serif;line-height:16px;letter-spacing:-0.199px;white-space:pre;color:#000">ALTA</span>
<span style="left:234px;top:350.5px;font:12px 'Liberation Sans',sans-serif;line-height:16px;letter-spacing:-0.211px;white-space:pre;color:#000">JOSE CARLOS MARTINEZ MONTOYA</span>
<span style="left:533px;top:350.5px;font:12px 'Liberation Sans',sans-serif;line-height:16px;letter-spacing:0.216px;white-space:pre;color:#000">100.00</span>
<span style="left:608px;top:350.5px;font:12px 'Liberation Sans',sans-serif;line-height:16px;letter-spacing:0.216px;white-space:pre;color:#000">104.52</span>
<span style="left:686.8px;top:350.5px;font:12px 'Liberation Sans',sans-serif;line-height:16px;letter-spacing:0.312px;white-space:pre;color:#000">7</span>
<span style="left:762.2px;top:351.5px;font:12px 'Liberation Sans',sans-serif;line-height:16px;letter-spacing:0.312px;white-space:pre;color:#000">1</span>
<span style="left:1062.2px;top:351.5px;font:12px 'Liberation Sans',sans-serif;line-height:16px;letter-spacing:0.312px;white-space:pre;color:#000">6</span>
<span style="left:1137.2px;top:351.5px;font:12px 'Liberation Sans',sans-serif;line-height:16px;letter-spacing:0.312px;white-space:pre;color:#000">1</span>
<span style="left:1212.2px;top:351.5px;font:12px 'Liberation Sans',sans-serif;line-height:16px;letter-spacing:0.312px;white-space:pre;color:#000">2</span>
<span style="left:1290px;top:351.5px;font:12px 'Liberation Sans',sans-serif;line-height:16px;letter-spacing:0.194px;white-space:pre;color:#000">50.00</span>
<span style="left:27.3px;top:367.5px;font:12px 'Liberation Sans',sans-serif;line-height:16px;letter-spacing:0.323px;white-space:pre;color:#000">102</span>
<span style="left:108.8px;top:367.5px;font:12px 'Liberation Sans',sans-serif;line-height:16px;letter-spacing:0.312px;white-space:pre;color:#000">2</span>
<span style="left:177.08px;top:367.5px;font:12px 'Liberation Sans',sans-serif;line-height:16px;letter-spacing:-0.199px;white-space:pre;color:#000">ALTA</span>
<span style="left:234px;top:367.5px;font:12px 'Liberation Sans',sans-serif;line-height:16px;letter-spacing:-0.221px;white-space:pre;color:#000">ARMANDO CUADROS DEL CONDE</span>
<span style="left:533px;top:367.5px;font:12px 'Liberation Sans',sans-serif;line-height:16px;letter-spacing:0.216px;white-space:pre;color:#000">200.00</span>
<span style="left:608px;top:367.5px;font:12px 'Liberation Sans',sans-serif;line-height:16px;letter-spacing:0.216px;white-space:pre;color:#000">209.04</span>
<span style="left:686.8px;top:367.5px;font:12px 'Liberation Sans',sans-serif;line-height:16px;letter-spacing:0.312px;white-space:pre;color:#000">7</span>
<span style="left:837.2px;top:368.5px;font:12px 'Liberation Sans',sans-serif;line-height:16px;letter-spacing:0.312px;white-space:pre;color:#000">1</span>
<span style="left:908.7px;top:368.5px;font:12px 'Liberation Sans',sans-serif;line-height:16px;letter-spacing:0.32px;white-space:pre;color:#000">01</span>
<span style="left:983px;top:368.5px;font:12px 'Liberation Sans',sans-serif;line-height:16px;letter-spacing:0.216px;white-space:pre;color:#000">233.33</span>
<span style="left:1062.2px;top:368.5px;font:12px 'Liberation Sans',sans-serif;line-height:16px;letter-spacing:0.312px;white-space:pre;color:#000">6</span>
<span style="left:27.3px;top:384.5px;font:12px 'Liberation Sans',sans-serif;line-height:16px;letter-spacing:0.323px;white-space:pre;color:#000">103</span>
<span style="left:108.8px;top:384.5px;font:12px 'Liberation Sans',sans-serif;line-height:16px;letter-spacing:0.312px;white-space:pre;color:#000">3</span>
<span style="left:177.08px;top:384.5px;font:12px 'Liberation Sans',sans-serif;line-height:16px;letter-spacing:-0.199px;white-space:pre;color:#000">ALTA</span>
<span style="left:234px;top:384.5px;font:12px 'Liberation Sans',sans-serif;line-height:16px;letter-spacing:-0.211px;white-space:pre;color:#000">MARIO PONTE ALEGRE</span>
<span style="left:533px;top:384.5px;font:12px 'Liberation Sans',sans-serif;line-height:16px;letter-spacing:0.216px;white-space:pre;color:#000">300.00</span>
<span style="left:608px;top:384.5px;font:12px 'Liberation Sans',sans-serif;line-height:16px;letter-spacing:0.216px;white-space:pre;color:#000">313.56</span>
<span style="left:686.8px;top:384.5px;font:12px 'Liberation Sans',sans-serif;line-height:16px;letter-spacing:0.312px;white-space:pre;color:#000">7</span>
<span style="left:1062.2px;top:385.5px;font:12px 'Liberation Sans',sans-serif;line-height:16px;letter-spacing:0.312px;white-space:pre;color:#000">7</span>
<span style="left:1137.2px;top:385.5px;font:12px 'Liberation Sans',sans-serif;line-height:16px;letter-spacing:0.312px;white-space:pre;color:#000">2</span>
<span style="left:1212.2px;top:385.5px;font:12px 'Liberation Sans',sans-serif;line-height:16px;letter-spacing:0.312px;white-space:pre;color:#000">6</span>
<span style="left:1283px;top:385.5px;font:12px 'Liberation Sans',sans-serif;line-height:16px;letter-spacing:0.216px;white-space:pre;color:#000">450.00</span>
<div style="left:1346px;top:113px;width:20px;height:616px;background:#e3e7ee;"></div>
<div style="left:1346px;top:113px;width:16px;height:616px;background:linear-gradient(90deg,#d9dde5,#e6e9ef);"></div>
<div style="left:1362px;top:113px;width:1px;height:616px;background:#9da3ab;"></div>
<div style="left:1363px;top:113px;width:3px;height:616px;background:#eceff4;"></div>
<div style="left:1346px;top:130px;width:15px;height:63px;border:1px solid #8f959f;border-radius:2px;background:linear-gradient(90deg,#f4f6f9,#e4e7ec)"></div>
<svg style="left:1346px;top:113px" width="16" height="616" viewBox="1346 113 16 616"><path d="M1350 124 h9 l-4.500 -5z" fill="#444"/><path d="M1350 718 h9 l-4.500 5z" fill="#444"/><path d="M1350 158.500 h8 M1350 160.500 h8 M1350 162.500 h8 M1350 164.500 h8" stroke="#7f848d" stroke-width="1"/></svg>
<svg id="icons" style="left:0;top:113px" width="1346" height="58" viewBox="0 113 1346 58"><defs>
<linearGradient id="sB" x1="0" y1="0" x2="0" y2="1"><stop offset="0" stop-color="#9cdafa"/><stop offset=".1" stop-color="#76bdec"/><stop offset=".3" stop-color="#4c9dd8"/><stop offset=".5" stop-color="#2e7cc0"/><stop offset=".58" stop-color="#16599f"/><stop offset=".8" stop-color="#0c4386"/><stop offset=".93" stop-color="#17579f"/><stop offset="1" stop-color="#2a6eb4"/></linearGradient>
<linearGradient id="sG" x1="0" y1="0" x2="0" y2="1"><stop offset="0" stop-color="#c8f078"/><stop offset=".1" stop-color="#b0e054"/><stop offset=".3" stop-color="#98cc34"/><stop offset=".5" stop-color="#84bc20"/><stop offset=".58" stop-color="#70aa12"/><stop offset=".8" stop-color="#5e9a0c"/><stop offset=".93" stop-color="#78b41c"/><stop offset="1" stop-color="#90c834"/></linearGradient>
<radialGradient id="eB" cx=".5" cy=".32" r=".72"><stop offset=".72" stop-color="#0a3a7c" stop-opacity="0"/><stop offset="1" stop-color="#0a3a7c" stop-opacity=".4"/></radialGradient>
<linearGradient id="rimB" x1="0" y1="0" x2="0" y2="1"><stop offset="0" stop-color="#b0e8ff" stop-opacity=".95"/><stop offset=".3" stop-color="#80ccff" stop-opacity="0"/><stop offset=".86" stop-color="#4a90dc" stop-opacity="0"/><stop offset="1" stop-color="#4a8cd8" stop-opacity=".55"/></linearGradient>
<radialGradient id="eG" cx=".5" cy=".32" r=".72"><stop offset=".72" stop-color="#4c8a08" stop-opacity="0"/><stop offset="1" stop-color="#4c8a08" stop-opacity=".4"/></radialGradient>
<linearGradient id="rimG" x1="0" y1="0" x2="0" y2="1"><stop offset="0" stop-color="#dcffa0" stop-opacity=".95"/><stop offset=".3" stop-color="#c0f070" stop-opacity="0"/><stop offset=".86" stop-color="#a0d850" stop-opacity="0"/><stop offset="1" stop-color="#a0d850" stop-opacity=".55"/></linearGradient>
<linearGradient id="hl" x1="0" y1="0" x2="0" y2="1"><stop offset="0" stop-color="#fff" stop-opacity=".5"/><stop offset="1" stop-color="#fff" stop-opacity=".14"/></linearGradient>
<radialGradient id="shB" cx=".5" cy=".5" r=".5"><stop offset="0" stop-color="#0c3a80" stop-opacity="1"/><stop offset=".55" stop-color="#2460ac" stop-opacity=".72"/><stop offset="1" stop-color="#5aa0e0" stop-opacity="0"/></radialGradient>
<radialGradient id="shG" cx=".5" cy=".5" r=".5"><stop offset="0" stop-color="#4a840a" stop-opacity="1"/><stop offset=".55" stop-color="#68a41c" stop-opacity=".72"/><stop offset="1" stop-color="#a0d050" stop-opacity="0"/></radialGradient>
<linearGradient id="wh" x1="0" y1="0" x2="1" y2="1"><stop offset="0" stop-color="#ffffff"/><stop offset=".6" stop-color="#f0f0f0"/><stop offset="1" stop-color="#bdbdbd"/></linearGradient>
<linearGradient id="wv" x1="0" y1="0" x2="0" y2="1"><stop offset="0" stop-color="#fdfdfd"/><stop offset="1" stop-color="#d4d4d4"/></linearGradient>
<linearGradient id="gr" x1="0" y1="0" x2="0" y2="1"><stop offset="0" stop-color="#d4f47c"/><stop offset=".45" stop-color="#8ecc20"/><stop offset=".55" stop-color="#a4d840"/><stop offset="1" stop-color="#c0e860"/></linearGradient>
<linearGradient id="gr2" x1="0" y1="0" x2="0" y2="1"><stop offset="0" stop-color="#e0f8a0"/><stop offset=".25" stop-color="#b8e458"/><stop offset=".5" stop-color="#8ccc1c"/><stop offset=".6" stop-color="#a8dc44"/><stop offset="1" stop-color="#c8ec70"/></linearGradient>
<linearGradient id="pyr" x1="0" y1="0" x2="0" y2="1"><stop offset="0" stop-color="#ffffff"/><stop offset=".3" stop-color="#ffffff"/><stop offset=".43" stop-color="#58d8f4"/><stop offset=".52" stop-color="#1a5c9c"/><stop offset=".75" stop-color="#0c3a74"/><stop offset="1" stop-color="#125898"/></linearGradient>
</defs>
<ellipse cx="36.3" cy="162.5" rx="22" ry="5" fill="url(#shG)"/>
<ellipse cx="36.3" cy="137.7" rx="24.800" ry="24.300" fill="url(#sG)"/>
<ellipse cx="36.3" cy="137.7" rx="24.800" ry="24.300" fill="url(#eG)"/>
<ellipse cx="36.3" cy="137.7" rx="24.100" ry="23.600" fill="none" stroke="url(#rimG)" stroke-width="1.500"/>
<ellipse cx="36.3" cy="127.19999999999999" rx="15.500" ry="10.800" fill="url(#hl)"/>
<ellipse cx="133.2" cy="162.5" rx="22" ry="5" fill="url(#shG)"/>
<ellipse cx="133.2" cy="137.7" rx="24.800" ry="24.300" fill="url(#sG)"/>
<ellipse cx="133.2" cy="137.7" rx="24.800" ry="24.300" fill="url(#eG)"/>
<ellipse cx="133.2" cy="137.7" rx="24.100" ry="23.600" fill="none" stroke="url(#rimG)" stroke-width="1.500"/>
<ellipse cx="133.2" cy="127.19999999999999" rx="15.500" ry="10.800" fill="url(#hl)"/>
<ellipse cx="230.3" cy="162.5" rx="22" ry="5" fill="url(#shB)"/>
<ellipse cx="230.3" cy="137.7" rx="24.800" ry="24.300" fill="url(#sB)"/>
<ellipse cx="230.3" cy="137.7" rx="24.800" ry="24.300" fill="url(#eB)"/>
<ellipse cx="230.3" cy="137.7" rx="24.100" ry="23.600" fill="none" stroke="url(#rimB)" stroke-width="1.500"/>
<ellipse cx="230.3" cy="127.19999999999999" rx="15.500" ry="10.800" fill="url(#hl)"/>
<ellipse cx="327.3" cy="162.5" rx="22" ry="5" fill="url(#shB)"/>
<ellipse cx="327.3" cy="137.7" rx="24.800" ry="24.300" fill="url(#sB)"/>
<ellipse cx="327.3" cy="137.7" rx="24.800" ry="24.300" fill="url(#eB)"/>
<ellipse cx="327.3" cy="137.7" rx="24.100" ry="23.600" fill="none" stroke="url(#rimB)" stroke-width="1.500"/>
<ellipse cx="327.3" cy="127.19999999999999" rx="15.500" ry="10.800" fill="url(#hl)"/>
<ellipse cx="424.3" cy="162.5" rx="22" ry="5" fill="url(#shB)"/>
<ellipse cx="424.3" cy="137.7" rx="24.800" ry="24.300" fill="url(#sB)"/>
<ellipse cx="424.3" cy="137.7" rx="24.800" ry="24.300" fill="url(#eB)"/>
<ellipse cx="424.3" cy="137.7" rx="24.100" ry="23.600" fill="none" stroke="url(#rimB)" stroke-width="1.500"/>
<ellipse cx="424.3" cy="127.19999999999999" rx="15.500" ry="10.800" fill="url(#hl)"/>
<ellipse cx="521.3" cy="162.5" rx="22" ry="5" fill="url(#shG)"/>
<ellipse cx="521.3" cy="137.7" rx="24.800" ry="24.300" fill="url(#sG)"/>
<ellipse cx="521.3" cy="137.7" rx="24.800" ry="24.300" fill="url(#eG)"/>
<ellipse cx="521.3" cy="137.7" rx="24.100" ry="23.600" fill="none" stroke="url(#rimG)" stroke-width="1.500"/>
<ellipse cx="521.3" cy="127.19999999999999" rx="15.500" ry="10.800" fill="url(#hl)"/>
<ellipse cx="618" cy="162.5" rx="22" ry="5" fill="url(#shB)"/>
<ellipse cx="618" cy="137.7" rx="24.800" ry="24.300" fill="url(#sB)"/>
<ellipse cx="618" cy="137.7" rx="24.800" ry="24.300" fill="url(#eB)"/>
<ellipse cx="618" cy="137.7" rx="24.100" ry="23.600" fill="none" stroke="url(#rimB)" stroke-width="1.500"/>
<ellipse cx="618" cy="127.19999999999999" rx="15.500" ry="10.800" fill="url(#hl)"/>
<ellipse cx="716.4" cy="162.5" rx="22" ry="5" fill="url(#shB)"/>
<ellipse cx="716.4" cy="137.7" rx="24.800" ry="24.300" fill="url(#sB)"/>
<ellipse cx="716.4" cy="137.7" rx="24.800" ry="24.300" fill="url(#eB)"/>
<ellipse cx="716.4" cy="137.7" rx="24.100" ry="23.600" fill="none" stroke="url(#rimB)" stroke-width="1.500"/>
<ellipse cx="716.4" cy="127.19999999999999" rx="15.500" ry="10.800" fill="url(#hl)"/>
<ellipse cx="813.3" cy="162.5" rx="22" ry="5" fill="url(#shB)"/>
<ellipse cx="813.3" cy="137.7" rx="24.800" ry="24.300" fill="url(#sB)"/>
<ellipse cx="813.3" cy="137.7" rx="24.800" ry="24.300" fill="url(#eB)"/>
<ellipse cx="813.3" cy="137.7" rx="24.100" ry="23.600" fill="none" stroke="url(#rimB)" stroke-width="1.500"/>
<ellipse cx="813.3" cy="127.19999999999999" rx="15.500" ry="10.800" fill="url(#hl)"/>
<ellipse cx="910.3" cy="162.5" rx="22" ry="5" fill="url(#shB)"/>
<ellipse cx="910.3" cy="137.7" rx="24.800" ry="24.300" fill="url(#sB)"/>
<ellipse cx="910.3" cy="137.7" rx="24.800" ry="24.300" fill="url(#eB)"/>
<ellipse cx="910.3" cy="137.7" rx="24.100" ry="23.600" fill="none" stroke="url(#rimB)" stroke-width="1.500"/>
<ellipse cx="910.3" cy="127.19999999999999" rx="15.500" ry="10.800" fill="url(#hl)"/>
<ellipse cx="1007.3" cy="162.5" rx="22" ry="5" fill="url(#shB)"/>
<ellipse cx="1007.3" cy="137.7" rx="24.800" ry="24.300" fill="url(#sB)"/>
<ellipse cx="1007.3" cy="137.7" rx="24.800" ry="24.300" fill="url(#eB)"/>
<ellipse cx="1007.3" cy="137.7" rx="24.100" ry="23.600" fill="none" stroke="url(#rimB)" stroke-width="1.500"/>
<ellipse cx="1007.3" cy="127.19999999999999" rx="15.500" ry="10.800" fill="url(#hl)"/>
<ellipse cx="1104" cy="162.5" rx="22" ry="5" fill="url(#shB)"/>
<ellipse cx="1104" cy="137.7" rx="24.800" ry="24.300" fill="url(#sB)"/>
<ellipse cx="1104" cy="137.7" rx="24.800" ry="24.300" fill="url(#eB)"/>
<ellipse cx="1104" cy="137.7" rx="24.100" ry="23.600" fill="none" stroke="url(#rimB)" stroke-width="1.500"/>
<ellipse cx="1104" cy="127.19999999999999" rx="15.500" ry="10.800" fill="url(#hl)"/>
<ellipse cx="1201.2" cy="162.5" rx="22" ry="5" fill="url(#shB)"/>
<ellipse cx="1201.2" cy="137.7" rx="24.800" ry="24.300" fill="url(#sB)"/>
<ellipse cx="1201.2" cy="137.7" rx="24.800" ry="24.300" fill="url(#eB)"/>
<ellipse cx="1201.2" cy="137.7" rx="24.100" ry="23.600" fill="none" stroke="url(#rimB)" stroke-width="1.500"/>
<ellipse cx="1201.2" cy="127.19999999999999" rx="15.500" ry="10.800" fill="url(#hl)"/>
<g transform="translate(36.3 137.7)"><path d="M4.600 -15 h5 v8.500 l6.200 5.700 h-3.600 v14.300 h-23.900 v-14.300 h-4.100 l16 -13.300 l4.400 3.800z" fill="url(#wh)"/><rect x="-2.300" y="5.500" width="4.900" height="8" fill="#000"/><circle cx="0" cy="-4.600" r="2.100" fill="#7a7a7a"/></g>
<g transform="translate(133.2 137.7)"><path d="M-17 -5.500 q-0.500 -4.500 4 -4.800 h26 q4.500 .3 4.200 4.800 q0 2.300 -2 2.300 h-4.500 q-1.500 0 -1.700 -1.800 l-.3 -1.500 h-17.500 l-.3 1.500 q-.2 1.800 -1.700 1.800 h-4.200 q-2 0 -2 -2.300z" fill="url(#wv)"/><path d="M-9 -4.500 h18 l6.500 9 q.5 1 .5 2 v5.500 h-32 v-5.500 q0 -1 .5 -2z" fill="url(#wv)"/><circle cx="0" cy="4.200" r="5" fill="#84bc20"/><circle cx="0" cy="4.200" r="3.400" fill="#74ac14"/><rect x="-3.500" y="-7" width="7" height="1.800" fill="#8cc42c"/></g>
<g transform="translate(230.3 137.7)"><circle cx="-6.600" cy="-13" r="3.300" fill="#c4ec78"/><path d="M-9.800 -8.500 h6.400 l3.800 9 l-1.600 .7 l-2.200 -5 l2.800 9 h-3 v11 h-2.200 v-11 h-1.800 v11 h-2.200 v-11 h-3 l2.800 -9 l-2.200 5 l-1.600 -.7z" fill="url(#gr)"/><circle cx="7.600" cy="-13" r="3.300" fill="#fff"/><path d="M2.600 -8.500 h10 q1.200 0 1.200 1.200 v9.800 h-2 v-8.500 h-.8 v22.200 h-2.800 v-12.700 h-1.200 v12.700 h-2.800 v-22.200 h-.8 v8.500 h-2 v-9.800 q0 -1.200 1.200 -1.200z" fill="url(#wv)"/></g>
<g transform="translate(327.3 137.7)"><rect x="-11.300" y="-15.500" width="23" height="33.500" fill="#1a62ac" fill-opacity=".35" stroke="#f0f4fa" stroke-width="1.300"/><rect x="-8.200" y="-11.300" width="16.400" height="3.200" rx=".6" fill="none" stroke="#f0f4fa" stroke-width="1"/><rect x="-8.2" y="-5.6" width="2.700" height="2.200" fill="#1a5aa4" fill-opacity=".5" stroke="#f0f5fc" stroke-width=".8"/><rect x="-8.2" y="-1.5" width="2.700" height="2.200" fill="#1a5aa4" fill-opacity=".5" stroke="#f0f5fc" stroke-width=".8"/><rect x="-8.2" y="2.6" width="2.700" height="2.200" fill="#1a5aa4" fill-opacity=".5" stroke="#f0f5fc" stroke-width=".8"/><rect x="-8.2" y="6.7" width="2.700" height="2.200" fill="#1a5aa4" fill-opacity=".5" stroke="#f0f5fc" stroke-width=".8"/><rect x="-3.8" y="-5.6" width="2.700" height="2.200" fill="#1a5aa4" fill-opacity=".5" stroke="#f0f5fc" stroke-width=".8"/><rect x="-3.8" y="-1.5" width="2.700" height="2.200" fill="#1a5aa4" fill-opacity=".5" stroke="#f0f5fc" stroke-width=".8"/><rect x="-3.8" y="2.6" width="2.700" height="2.200" fill="#1a5aa4" fill-opacity=".5" stroke="#f0f5fc" stroke-width=".8"/><rect x="-3.8" y="6.7" width="2.700" height="2.200" fill="#1a5aa4" fill-opacity=".5" stroke="#f0f5fc" stroke-width=".8"/><rect x="0.6" y="-5.6" width="2.700" height="2.200" fill="#1a5aa4" fill-opacity=".5" stroke="#f0f5fc" stroke-width=".8"/><rect x="0.6" y="-1.5" width="2.700" height="2.200" fill="#1a5aa4" fill-opacity=".5" stroke="#f0f5fc" stroke-width=".8"/><rect x="0.6" y="2.6" width="2.700" height="2.200" fill="#1a5aa4" fill-opacity=".5" stroke="#f0f5fc" stroke-width=".8"/><rect x="0.6" y="6.7" width="2.700" height="2.200" fill="#1a5aa4" fill-opacity=".5" stroke="#f0f5fc" stroke-width=".8"/><rect x="0.6" y="10.8" width="2.700" height="2.200" fill="#1a5aa4" fill-opacity=".5" stroke="#f0f5fc" stroke-width=".8"/><rect x="5.0" y="-5.6" width="2.700" height="2.200" fill="#1a5aa4" fill-opacity=".5" stroke="#f0f5fc" stroke-width=".8"/><rect x="5.0" y="-1.5" width="2.700" height="2.200" fill="#1a5aa4" fill-opacity=".5" stroke="#f0f5fc" stroke-width=".8"/><rect x="5.0" y="2.6" width="2.700" height="2.200" fill="#1a5aa4" fill-opacity=".5" stroke="#f0f5fc" stroke-width=".8"/><rect x="-8.200" y="10.800" width="7.100" height="2.200" fill="none" stroke="#f0f5fc" stroke-width=".8"/><rect x="5" y="6.700" width="2.700" height="6.300" fill="none" stroke="#f0f5fc" stroke-width=".8"/></g>
<g transform="translate(424.3 137.7)"><path d="M-8.100 -16.800 h18 l4.400 4.400 v26.300 h-22.400z" fill="url(#wh)"/><path d="M9.900 -16.800 v4.400 h4.400z" fill="#8c8c8c"/><path d="M-15.200 -12.600 h18.500 l4.600 4.600 v26.200 h-23.100z" fill="url(#wh)" stroke="#d8d8d8" stroke-width=".4"/><path d="M3.300 -12.600 v4.600 h4.600z" fill="#7c7c7c"/></g>
<g transform="translate(521.3 137.7)"><path d="M0.500 3.500 l14 8.500" stroke="#e4e4e4" stroke-width="4.600" stroke-linecap="round"/><path d="M0.500 3 l14 8.500" stroke="#fff" stroke-width="2.400" stroke-linecap="round"/><circle cx="-7.100" cy="-3.400" r="8.400" fill="#9cd040" fill-opacity=".35" stroke="url(#wv)" stroke-width="3.200"/></g>
<g transform="translate(618 137.7)"><path d="M-10 -15.100 h17.800 l4.600 4.600 v26.600 h-22.400z" fill="url(#wh)"/><path d="M7.800 -15.100 v4.600 h4.600z" fill="#8c8c8c"/><path d="M-13 -2.300 l19 18.500" stroke="#f0f8d8" stroke-width="2.600" stroke-linecap="round"/><path d="M-12.500 -1.800 l18.500 18" stroke="#8ccc20" stroke-width="1.500" stroke-linecap="round"/></g>
<g transform="translate(716.4 137.7)"><path d="M-5 -10.800 h10 l11.200 21.800 h-8.500 l-7.700 -14.500 l-7.700 14.500 h-8.800z" fill="url(#pyr)"/><path d="M-3.200 0 l-5.800 11 M3.200 0 l5.800 11" stroke="#20c4ec" stroke-width=".9" fill="none"/><path d="M-3.500 4.800 h7 v5.800 h-7z" fill="#1c94dc" stroke="#40b8f0" stroke-width=".6"/><path d="M-16 10.700 h7.500 M8.500 10.700 h7.500" stroke="#18b8dc" stroke-width=".9"/></g>
<g transform="translate(813.3 137.7)"><rect x="-11.7" y="-11.1" width="7" height="6.900" fill="#1458a8" fill-opacity="0.3"/><rect x="-11.7" y="-3.1" width="7" height="6.900" fill="#1458a8" fill-opacity="0.3"/><rect x="-11.7" y="4.9" width="7" height="6.900" fill="#1458a8" fill-opacity="0.3"/><rect x="-3.6" y="-11.1" width="7" height="6.900" fill="#1458a8" fill-opacity="0.3"/><rect x="-3.6" y="-3.1" width="7" height="6.900" fill="#222" fill-opacity="1"/><rect x="-3.6" y="4.9" width="7" height="6.900" fill="#1458a8" fill-opacity="0.3"/><rect x="4.5" y="-11.1" width="7" height="6.900" fill="#1458a8" fill-opacity="0.3"/><rect x="4.5" y="-3.1" width="7" height="6.900" fill="#1458a8" fill-opacity="0.3"/><rect x="4.5" y="4.9" width="7" height="6.900" fill="#1458a8" fill-opacity="0.3"/><path d="M-12.300 -11.700 h24.500 v24.200 h-24.500z M-4.200 -11.700 v24.200 M3.900 -11.700 v24.200 M-12.300 -3.700 h24.500 M-12.300 4.300 h24.500" fill="none" stroke="#f8f8f8" stroke-width="1.400"/><path d="M-12.300 13.300 h24.500" stroke="#b8b8b8" stroke-width=".6"/></g>
<g transform="translate(910.3 137.7)"><path d="M-15.300 -11.500 q0 -2.300 2.300 -2.500 q6.500 -.2 12 -1.300 q.6 .5 1.200 .5 q.6 0 1.200 -.5 q5.500 1.100 12 1.300 q2.300 .2 2.300 2.500 v8.500 q-1 12.500 -15.600 18.900 q-14.400 -6.400 -15.400 -18.900z" fill="url(#gr2)"/><path d="M-15.300 -3 q12 7 31 -8 v8.500 q-.3 3 -1.300 5.500 q-14 8 -27.500 3.500 q-2 -4 -2.200 -9.500z" fill="#fff" fill-opacity=".2"/><path d="M-14.800 -11.800 q0 -1.800 2 -2 q6.500 -.2 12 -1.200 q.6 .5 1.200 .5 q.6 0 1.200 -.5 q5.500 1 12 1.200 q2 .2 2 2" fill="none" stroke="#f4ffe0" stroke-width=".9" stroke-opacity=".9"/></g>
<g transform="translate(1007.3 137.7)"><path d="M-13.700 -14.500 l11 -1 l5 11 l-11.500 2.500z" fill="#8cc8f4" fill-opacity=".35" stroke="#f0f0f0" stroke-width="1"/><path d="M-14.600 1 l8 -6.500 l14 -2 l7 5 v9 l-8 10 l-13 -2.500 l-8 -4z" fill="url(#wh)"/><path d="M-13 4.500 l7.500 3.500 l19 -4.500 M-5.500 8 l1 3 l17 -4.500" fill="none" stroke="#6a8098" stroke-width="1"/><path d="M-2.500 12.500 l11.500 -3 l5.500 3 l-11 4.500z" fill="#fff" stroke="#9aa" stroke-width=".7"/><path d="M-8 -1 l6 2.500 l11 -3" fill="none" stroke="#8a98a8" stroke-width=".8"/></g>
<g transform="translate(1104 137.7)"><rect x="-17.500" y="-10.800" width="26" height="25.300" fill="#1c6cc0" fill-opacity=".3" stroke="#c8e0f0" stroke-width="1.200"/><path d="M-17.500 14.500 h26 v-25.300" fill="none" stroke="#a8d050" stroke-width="1"/><path d="M-16.500 -.5 l6.500 -.800 l2.500 5 l20.500 -18.200 l4.800 5 l-26.500 22z" fill="url(#gr)"/></g>
<g transform="translate(1201.2 137.7)"><path d="M-14.800 -14.500 h30 v29.500 h-26.500 l-3.500 -3.500z" fill="#1c6cc0" fill-opacity=".3" stroke="#f0f4fa" stroke-width="1.400"/><path d="M-10.500 -14.500 v12 q0 1.200 1.200 1.200 h19 q1.200 0 1.200 -1.200 v-12" fill="#8cc4f0" fill-opacity=".25" stroke="#f0f4fa" stroke-width="1.300"/><path d="M-7 15 v-10 h15.500 v10" fill="none" stroke="#f0f4fa" stroke-width="1.300"/><rect x="-.5" y="5.500" width="6.500" height="9.500" fill="url(#wv)"/></g></svg>
<div id="ilab" style="left:0;top:0;width:1346px;height:200px;will-change:transform">
<span class="il" style="left:23.2px;top:165px;letter-spacing:0.519px">Inicio</span>
<span class="il" style="left:120.6px;top:165px;letter-spacing:0.459px">Datos</span>
<span class="il" style="left:110.4px;top:176px;letter-spacing:0.492px">Generales</span>
<span class="il" style="left:209.5px;top:165px;letter-spacing:0.489px">Catálogo</span>
<span class="il" style="left:200px;top:176px;letter-spacing:0.493px">Trabajadores</span>
<span class="il" style="left:309.5px;top:165px;letter-spacing:0.515px">Calculo</span>
<span class="il" style="left:309.5px;top:176px;letter-spacing:0.401px">Nómina</span>
<span class="il" style="left:395.7px;top:165px;letter-spacing:0.447px">Consecutivo</span>
<span class="il" style="left:397px;top:176px;letter-spacing:0.471px">de Nóminas</span>
<span class="il" style="left:492px;top:165px;letter-spacing:0.497px">Visualizador</span>
<span class="il" style="left:494px;top:176px;letter-spacing:0.471px">de Nóminas</span>
<span class="il" style="left:593.3px;top:165px;letter-spacing:0.458px">Detalle  de</span>
<span class="il" style="left:598.4px;top:176px;letter-spacing:0.429px">Nóminas</span>
<span class="il" style="left:690px;top:165px;letter-spacing:0.469px">Acumulado</span>
<span class="il" style="left:686.4px;top:176px;letter-spacing:0.485px">Trabajadores</span>
<span class="il" style="left:781.2px;top:165px;letter-spacing:0.421px">Tablas de ISR</span>
<span class="il" style="left:785.3px;top:176px;letter-spacing:0.509px">del Art. 113</span>
<span class="il" style="left:880.9px;top:165px;letter-spacing:0.442px">Tablas IMSS</span>
<span class="il" style="left:987.2px;top:165px;letter-spacing:0.439px">Imprimir</span>
<span class="il" style="left:1086.1px;top:165px;letter-spacing:0.491px">Generar</span>
<span class="il" style="left:1092.2px;top:176px;letter-spacing:0.323px">CFDI</span>
<span class="il" style="left:1182.9px;top:165px;letter-spacing:0.418px">Guardar</span>
<span class="il" style="left:1183.1px;top:176px;letter-spacing:0.451px">Nómina</span>
</div>
<div style="left:502px;top:113px;width:1px;height:616px;background:#4a4a4a;"></div>
<div style="left:0px;top:729px;width:1366px;height:17px;background:linear-gradient(180deg,#dcdfe7,#e4e7ee 50%,#dfe2ea);"></div>
<div style="left:0px;top:745px;width:1366px;height:1px;background:#9aa1ab;"></div>
<div style="left:1px;top:729px;width:17px;height:16px;background:linear-gradient(180deg,#e2e5ec,#dadde5);"></div>
<div style="left:17px;top:729px;width:900px;height:17px;border:1px solid #8a919b;border-bottom:2px solid #8f96a0;border-radius:2px;background:linear-gradient(180deg,#f2f4f8 0%,#e9ecf1 50%,#dfe2e9 100%)"></div>
<svg style="left:0;top:729px" width="1366" height="17" viewBox="0 729 1366 17"><path d="M10.500 732.500 v10 l-5.500 -5z" fill="#444"/><path d="M1335 732.500 v10 l5.500 -5z" fill="#444"/><path d="M463.500 734 v7 M465.500 734 v7 M467.500 734 v7 M469.500 734 v7" stroke="#7c828c"/></svg>
<div style="left:1346px;top:729px;width:1px;height:17px;background:#c4c8d0;"></div>
<div style="left:1347px;top:729px;width:19px;height:16px;background:#dfe2ea;"></div>
<div style="left:0px;top:746px;width:1366px;height:20px;background:linear-gradient(180deg,#e3e5e9 0%,#d4d7dc 35%,#c3c6cc 70%,#b7babf 100%);"></div>
<div style="left:0px;top:746px;width:1366px;height:1px;background:#eef0f3;"></div>
<div style="left:68px;top:748px;width:1px;height:18px;background:#8f9399;"></div>
<div style="left:69px;top:748px;width:1px;height:18px;background:#e8eaee;"></div>
<div style="left:103px;top:748px;width:1px;height:18px;background:#8f9399;"></div>
<div style="left:104px;top:748px;width:1px;height:18px;background:#e8eaee;"></div>
<div style="left:1124px;top:748px;width:1px;height:18px;background:#8f9399;"></div>
<div style="left:1125px;top:748px;width:1px;height:18px;background:#e8eaee;"></div>
<span style="left:8px;top:748.5px;font:11.500px 'Liberation Sans',sans-serif;line-height:16px;letter-spacing:-0.099px;white-space:pre;color:#2a2a2a">Listo</span>
<span style="left:1194.3px;top:748.5px;font:11.500px 'Liberation Sans',sans-serif;line-height:16px;letter-spacing:-0.23px;white-space:pre;color:#2a2a2a">100%</span>
<svg style="left:0;top:746px" width="1366" height="20" viewBox="0 746 1366 20">
<defs><linearGradient id="stHi" x1="0" y1="0" x2="0" y2="1"><stop offset="0" stop-color="#fdecb0"/><stop offset=".5" stop-color="#fdd868"/><stop offset="1" stop-color="#fee98a"/></linearGradient>
<linearGradient id="stC" x1="0" y1="0" x2="0" y2="1"><stop offset="0" stop-color="#ffffff"/><stop offset="1" stop-color="#dcdfe4"/></linearGradient></defs>
<rect x="78.500" y="750.500" width="14" height="11" fill="#f6f8fc" stroke="#3f5f9c"/><rect x="79" y="751" width="13" height="2.500" fill="#5a8be0"/>
<path d="M80.500 756 h3 M85 756 h3 M89 756 h2.500 M80.500 758.500 h3 M85 758.500 h3 M89 758.500 h2.500" stroke="#6f8fd0" stroke-width="1.200"/>
<circle cx="80.500" cy="751.500" r="2.700" fill="#e0502c"/><circle cx="79.800" cy="750.800" r="1" fill="#f8a890"/>
<rect x="1129.500" y="747.500" width="18" height="18" rx="2.500" fill="url(#stHi)" stroke="#d8a838"/>
<rect x="1132.500" y="751.500" width="13" height="10" fill="#fff" stroke="#5a5a5a" stroke-width="1"/><path d="M1132.500 754.500 h13 M1132.500 758.500 h13 M1136.500 751.500 v10 M1141.500 751.500 v10" stroke="#5a5a5a" stroke-width="1"/>
<rect x="1151" y="750.500" width="13" height="11" fill="#b8bcc4" stroke="#5a5e66" stroke-width="1.200"/><rect x="1154" y="753" width="7" height="7" fill="#fff" stroke="#5a5e66" stroke-width=".8"/><path d="M1155.500 755.500 h4 M1155.500 757.500 h4" stroke="#777"/>
<rect x="1170" y="750.500" width="13" height="11" fill="#b8bcc4" stroke="#5a5e66" stroke-width="1.200"/><rect x="1171" y="751.500" width="3.500" height="6.500" fill="#fff"/><rect x="1175.500" y="751.500" width="3" height="6.500" fill="#fff"/>
<path d="M1246 755.500 h100" stroke="#7a7e86"/><path d="M1246 756.500 h100" stroke="#e8eaee"/>
<circle cx="1237.800" cy="755.600" r="7.300" fill="url(#stC)" stroke="#7a7e86"/><rect x="1233.500" y="754.500" width="8.500" height="2.200" fill="#444"/>
<circle cx="1353.600" cy="755.600" r="7.300" fill="url(#stC)" stroke="#7a7e86"/><rect x="1349.300" y="754.500" width="8.500" height="2.200" fill="#444"/><rect x="1352.500" y="751.300" width="2.200" height="8.500" fill="#444"/>
<path d="M1292.500 749.500 h8.500 v7.500 l-4.250 4.500 l-4.250 -4.500z" fill="url(#stC)" stroke="#6a6e76"/>
</svg>
<div style="left:0px;top:766px;width:1366px;height:2px;background:linear-gradient(180deg,#9aa8bc 0,#9aa8bc 1px,#dfe9f6 1px);"></div>
<div style="left:60px;top:766px;width:58px;height:3px;background:#fff;border:1px solid #2a2e36;border-radius:2px 2px 0 0"></div>
<div style="left:121px;top:766px;width:59px;height:3px;background:#fff;border:1px solid #2a2e36;border-radius:2px 2px 0 0"></div>
<div style="left:183px;top:766px;width:52px;height:3px;background:#fff;border:1px solid #2a2e36;border-radius:2px 2px 0 0"></div>
<div style="left:244px;top:766px;width:60px;height:3px;background:#fff;border:1px solid #2a2e36;border-radius:2px 2px 0 0"></div>
<div style="left:431px;top:766px;width:59px;height:3px;background:#fff;border:1px solid #2a2e36;border-radius:2px 2px 0 0"></div>
<div style="left:680px;top:766px;width:59px;height:3px;background:#fff;border:1px solid #2a2e36;border-radius:2px 2px 0 0"></div>
<div style="left:742px;top:766px;width:58px;height:3px;background:#fff;border:1px solid #2a2e36;border-radius:2px 2px 0 0"></div>
<div style="left:804px;top:766px;width:58px;height:3px;background:#fff;border:1px solid #2a2e36;border-radius:2px 2px 0 0"></div>
<div style="left:866px;top:766px;width:58px;height:3px;background:#fff;border:1px solid #2a2e36;border-radius:2px 2px 0 0"></div>
</div>
</body>
</html>
